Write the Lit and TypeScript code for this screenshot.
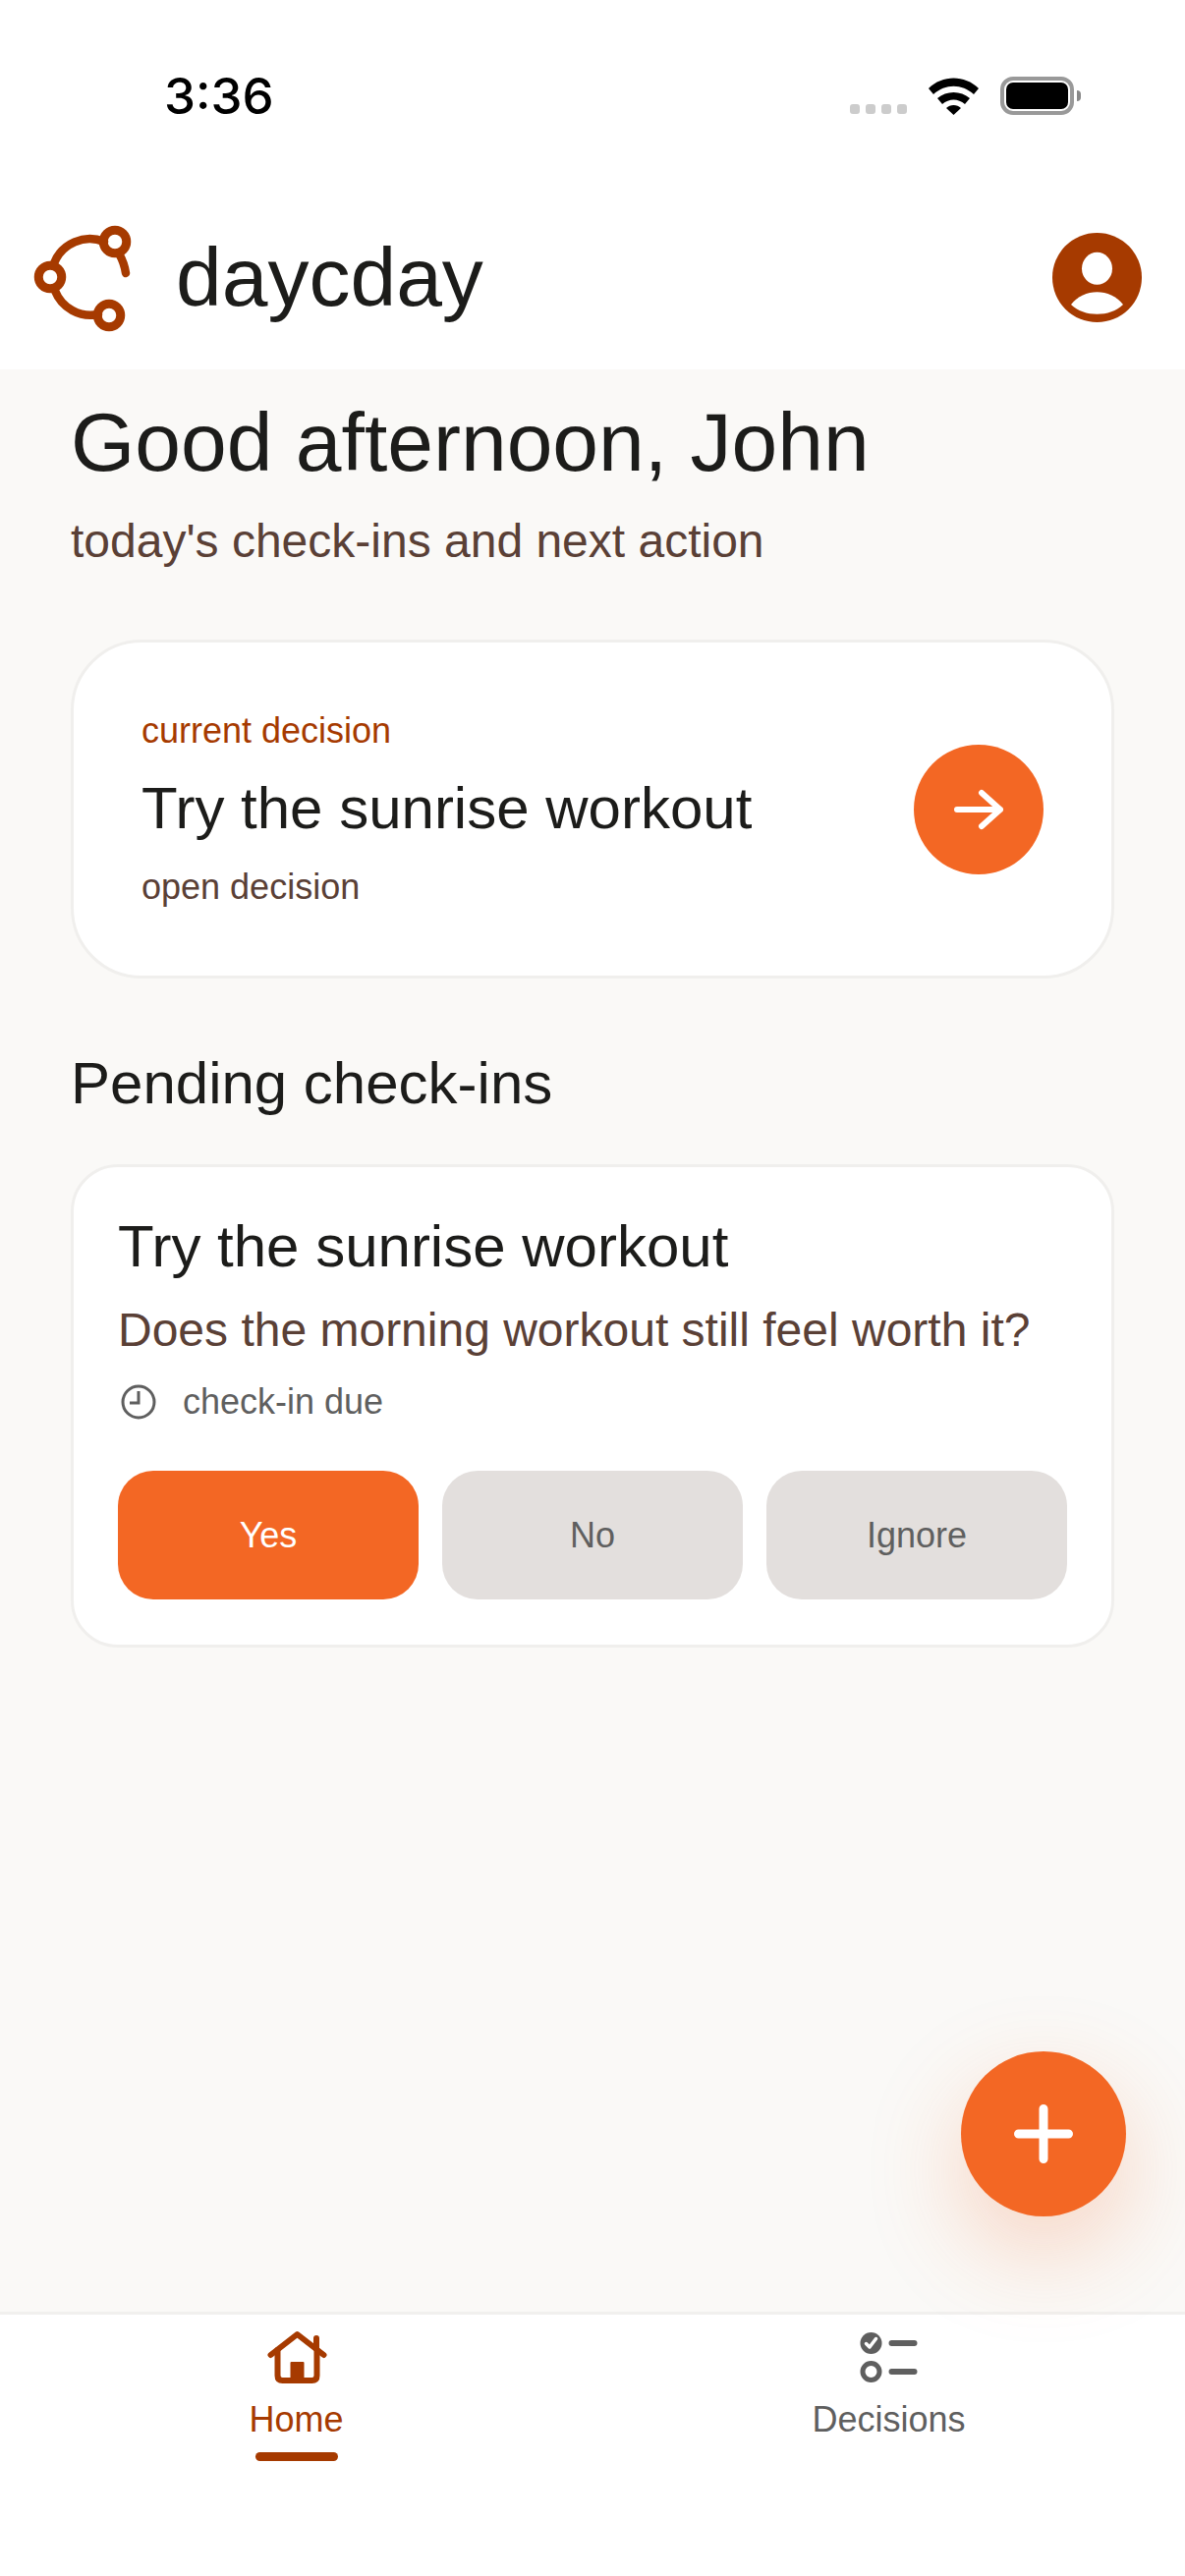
import { LitElement, css, html } from "lit";
import { customElement } from "lit/decorators.js";

const logoIcon = html`<svg class="logo" viewBox="30 216 108 132" fill="none" stroke="#a63a00" stroke-width="8.5" stroke-linecap="round">
  <path d="M106 246 A39 39 0 0 0 55 268" />
  <path d="M56 296 A39 39 0 0 0 100 320" />
  <path d="M121 258 C125 265 127 271 128 278" />
  <circle cx="117" cy="246" r="11.75" stroke-width="9" />
  <circle cx="51" cy="282" r="11.75" stroke-width="9" />
  <circle cx="111" cy="321" r="11.75" stroke-width="9" />
</svg>`;

const avatarIcon = html`<svg class="avatar" viewBox="0 0 91 91">
  <circle cx="45.5" cy="45.5" r="45.5" fill="#a63a00" />
  <ellipse cx="45.5" cy="36.3" rx="15.5" ry="16.5" fill="#fff" />
  <path d="M19 73 C32 56 59 56 72 73 C59 86 32 86 19 73 Z" fill="#fff" />
</svg>`;

const wifiIcon = html`<svg width="51" height="38" viewBox="0 0 51 38">
  <path d="M0 11 C14 -3 37 -3 51 11 L46 17 C34 6 17 6 5 17 Z" />
  <path d="M9 21 C18 13 33 13 42 21 L37 27 C30 21 21 21 14 27 Z" />
  <path d="M18 31 C22 27 29 27 33 31 L25.5 38 Z" />
</svg>`;

const arrowIcon = html`<svg width="54" height="54" viewBox="0 0 54 54" fill="none" stroke="#fff" stroke-width="6" stroke-linecap="round" stroke-linejoin="round">
  <path d="M5 27 H49 M30 10 L49 27 L30 44" />
</svg>`;

const clockIcon = html`<svg class="clock" width="36" height="36" viewBox="0 0 36 36" fill="none" stroke="#5f5f5f" stroke-width="3">
  <circle cx="18" cy="18" r="16" />
  <path d="M18 7 V19 H9" />
</svg>`;

const homeIcon = html`<svg class="tab-icon" viewBox="0 0 66 66" fill="none" stroke="#a63a00" stroke-width="6" stroke-linecap="round" stroke-linejoin="round">
  <path d="M6.5 31 L33.5 10 L60.5 31" />
  <path d="M13.5 26 V52 Q13.5 57 18.5 57 H48.5 Q53.5 57 53.5 52 V26" />
  <path d="M53 14 V24" />
  <rect x="26.5" y="38" width="14" height="20" rx="1" fill="#a63a00" stroke="none" />
</svg>`;

const decisionsIcon = html`<svg class="tab-icon" viewBox="0 0 66 66" fill="none" stroke="#5f5f5f" stroke-width="6" stroke-linecap="round" stroke-linejoin="round">
  <circle cx="14.5" cy="19" r="11" fill="#5f5f5f" stroke="none" />
  <path d="M9.5 19.5 L13 23 L19.5 14.5" stroke="#fff" stroke-width="3.5" />
  <circle cx="14.5" cy="48" r="8.5" stroke-width="5" />
  <path d="M35.5 19 H58.5 M35.5 48 H58.5" />
</svg>`;

@customElement("app-root")
export class AppRoot extends LitElement {
  static styles = css`
    :host {
      display: flex;
      flex-direction: column;
      position: relative;
      width: 1206px;
      height: 2622px;
      overflow: hidden;
      background: #faf9f7;
      font-family: "Liberation Sans", Arial, sans-serif;
      color: #1c1c1a;
    }

    .top {
      background: #fff;
    }

    .status {
      height: 189px;
      box-sizing: border-box;
      padding: 70px 106px 0 167px;
      display: flex;
      justify-content: space-between;
      align-items: flex-start;
    }

    .time {
      font-family: Inter, sans-serif;
      font-size: 51px;
      font-weight: 500;
      line-height: 56px;
      color: #000;
    }

    .status-icons {
      display: flex;
      align-items: flex-end;
      padding-top: 8px;
    }

    .signal {
      display: flex;
      gap: 6px;
      margin-right: 22px;
      margin-bottom: 1px;
    }

    .signal i {
      width: 10px;
      height: 10px;
      border-radius: 3px;
      background: #ccc;
    }

    .battery {
      display: flex;
      align-items: center;
      margin-left: 22px;
    }

    .battery-body {
      box-sizing: border-box;
      width: 75px;
      height: 39px;
      padding: 2px;
      border: 4px solid #999;
      border-radius: 13px;
    }

    .battery-body i {
      display: block;
      height: 100%;
      border-radius: 7px;
      background: #000;
    }

    .battery-nub {
      width: 4px;
      height: 11px;
      margin-left: 3px;
      border-radius: 0 6px 6px 0;
      background: #888;
    }

    .bar {
      height: 187px;
      box-sizing: border-box;
      padding: 0 44px 1px 30px;
      display: flex;
      align-items: center;
    }

    .logo {
      width: 108px;
      height: 132px;
      margin-right: 41px;
    }

    .brand {
      flex: 1;
      font-size: 84px;
      line-height: 100px;
    }

    .avatar {
      width: 91px;
      height: 91px;
    }

    main {
      flex: 1;
      padding: 24px 72px 0;
    }

    h1,
    h2,
    h3,
    p {
      margin: 0;
      font-weight: 400;
    }

    h1 {
      font-size: 84px;
      line-height: 100px;
    }

    .lead {
      margin-top: 21px;
      font-size: 48px;
      line-height: 60px;
      color: #5a4036;
    }

    .card {
      box-sizing: border-box;
      border: 3px solid #f0efed;
      background: #fff;
    }

    .current {
      margin-top: 70px;
      height: 345px;
      padding: 0 69px;
      border-radius: 72px;
      display: flex;
      align-items: center;
      justify-content: space-between;
    }

    .eyebrow {
      font-size: 36px;
      line-height: 48px;
      color: #a63a00;
    }

    .current h3 {
      margin-top: 19px;
      font-size: 60px;
      line-height: 72px;
    }

    .state {
      margin-top: 20px;
      font-size: 36px;
      line-height: 48px;
      color: #5a4036;
    }

    .go {
      width: 132px;
      height: 132px;
      border-radius: 50%;
      background: #f36724;
      display: flex;
      align-items: center;
      justify-content: center;
    }

    h2 {
      margin-top: 71px;
      font-size: 60px;
      line-height: 72px;
    }

    .checkin {
      margin-top: 46px;
      padding: 45px 45px 46px;
      border-radius: 48px;
    }

    .checkin h3 {
      font-size: 60px;
      line-height: 72px;
    }

    .question {
      margin-top: 19px;
      font-size: 48px;
      line-height: 60px;
      color: #5a4036;
    }

    .due {
      margin-top: 19px;
      display: flex;
      align-items: center;
      gap: 27px;
      font-size: 36px;
      line-height: 48px;
      color: #5f5f5f;
    }

    .clock {
      margin-left: 3px;
    }

    .actions {
      margin-top: 46px;
      display: grid;
      grid-template-columns: repeat(3, 1fr);
      gap: 24px;
    }

    .actions button {
      height: 131px;
      border: 0;
      border-radius: 36px;
      background: #e3dfdd;
      color: #5f5f5f;
      font: 36px "Liberation Sans", Arial, sans-serif;
    }

    .actions .yes {
      background: #f36724;
      color: #fff;
    }

    nav {
      height: 269px;
      box-sizing: border-box;
      border-top: 3px solid #f1f0ee;
      background: #fff;
      display: grid;
      grid-template-columns: 1fr 1fr;
    }

    .tab {
      padding-top: 10px;
      display: flex;
      flex-direction: column;
      align-items: center;
      font-size: 36px;
      line-height: 42px;
      color: #5f5f5f;
    }

    .tab.active {
      color: #a63a00;
    }

    .tab-icon {
      width: 66px;
      height: 66px;
    }

    .tab span {
      margin-top: 10px;
    }

    .tab i {
      width: 84px;
      height: 9px;
      margin-top: 12px;
      border-radius: 5px;
      background: #a63a00;
    }

    .fab {
      position: absolute;
      right: 60px;
      top: 2088px;
      width: 168px;
      height: 168px;
      border-radius: 50%;
      background: #f36724;
      box-shadow: 0 36px 96px rgba(244, 103, 35, 0.25);
      display: flex;
      align-items: center;
      justify-content: center;
    }
  `;

  render() {
    return html`
      <header class="top">
        <div class="status">
          <span class="time">3:36</span>
          <div class="status-icons">
            <div class="signal"><i></i><i></i><i></i><i></i></div>
            ${wifiIcon}
            <div class="battery">
              <div class="battery-body"><i></i></div>
              <div class="battery-nub"></div>
            </div>
          </div>
        </div>
        <div class="bar">
          ${logoIcon}
          <span class="brand">daycday</span>
          ${avatarIcon}
        </div>
      </header>

      <main>
        <h1>Good afternoon, John</h1>
        <p class="lead">today's check-ins and next action</p>

        <section class="card current">
          <div>
            <p class="eyebrow">current decision</p>
            <h3>Try the sunrise workout</h3>
            <p class="state">open decision</p>
          </div>
          <div class="go">${arrowIcon}</div>
        </section>

        <h2>Pending check-ins</h2>

        <section class="card checkin">
          <h3>Try the sunrise workout</h3>
          <p class="question">Does the morning workout still feel worth it?</p>
          <div class="due">${clockIcon}<span>check-in due</span></div>
          <div class="actions">
            <button class="yes">Yes</button>
            <button>No</button>
            <button>Ignore</button>
          </div>
        </section>
      </main>

      <nav>
        <div class="tab active">${homeIcon}<span>Home</span><i></i></div>
        <div class="tab">${decisionsIcon}<span>Decisions</span></div>
      </nav>

      <div class="fab">
        <svg width="60" height="60" viewBox="0 0 60 60" stroke="#fff" stroke-width="9" stroke-linecap="round">
          <path d="M30 4.5 V55.5 M4.5 30 H55.5" />
        </svg>
      </div>
    `;
  }
}
